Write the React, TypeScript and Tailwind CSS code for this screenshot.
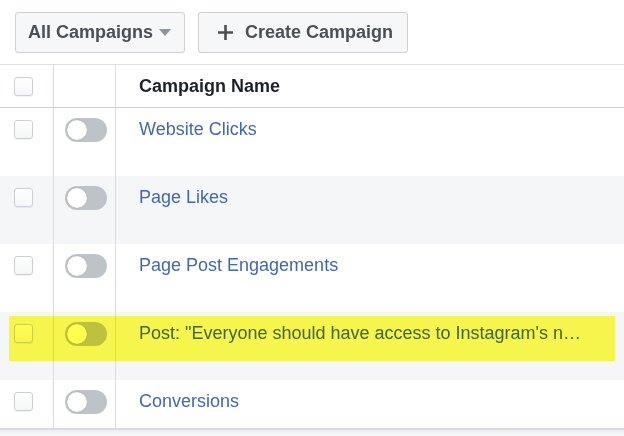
import React from "react";

const rows = [
  { name: "Website Clicks", shaded: false },
  { name: "Page Likes", shaded: true },
  { name: "Page Post Engagements", shaded: false },
  { name: "Post: \"Everyone should have access to Instagram's n…", shaded: true },
  { name: "Conversions", shaded: false },
];

function Checkbox() {
  return (
    <span className="block w-[19px] h-[19px] rounded-[3px] border border-[#ccd0d5] bg-gradient-to-b from-white to-[#f5f6f7] shadow-[0_1px_1px_rgba(0,0,0,0.06)]" />
  );
}

function Toggle() {
  return (
    <span className="flex items-center w-[42px] h-[24px] rounded-full bg-[#bec2c9] p-[2px]">
      <span className="block w-[20px] h-[20px] rounded-full bg-white shadow-[0_0_1px_rgba(0,0,0,0.3)]" />
    </span>
  );
}

export default function App() {
  return (
    <div className="relative w-[624px] h-[436px] overflow-hidden bg-white font-['Liberation_Sans',Arial,sans-serif] text-[18px]">
      {/* Toolbar */}
      <div className="flex gap-[13px] h-[64px] pl-[15px] pt-[12px]">
        <button className="flex items-center gap-[6px] w-[170px] h-[41px] pl-[12px] rounded-[3px] border border-[#ced0d4] bg-[#f6f7f9] font-bold text-[#4b4f56]">
          All Campaigns
          <svg width="12" height="7" viewBox="0 0 12 7">
            <path d="M0 0h12L6 7z" fill="#8d949e" />
          </svg>
        </button>
        <button className="flex items-center gap-[12px] w-[210px] h-[41px] pl-[19px] rounded-[3px] border border-[#ced0d4] bg-[#f6f7f9] font-bold text-[#4b4f56]">
          <svg width="15" height="15" viewBox="0 0 15 15">
            <path d="M7.5 0v15M0 7.5h15" stroke="#4b4f56" strokeWidth="2.6" />
          </svg>
          Create Campaign
        </button>
      </div>

      {/* Table */}
      <div className="border-t border-[#dddfe2]">
        <div className="flex h-[43px] border-b border-[#cfd2d6] shadow-[0_1px_1px_rgba(0,0,0,0.08)]">
          <div className="flex items-center w-[54px] pl-[14px] border-r border-[#dadde1]">
            <Checkbox />
          </div>
          <div className="w-[62px] border-r border-[#dadde1]" />
          <div className="flex items-center pl-[23px] font-bold text-[#1d2129]">Campaign Name</div>
        </div>

        <div className="h-[320px] overflow-hidden">
          {rows.map((row) => (
            <div key={row.name} className={`flex h-[68px] ${row.shaded ? "bg-[#f5f6f8]" : "bg-white"}`}>
              <div className="flex items-start w-[54px] pl-[14px] pt-[12px] border-r border-[#dadde1]">
                <Checkbox />
              </div>
              <div className="flex items-start w-[62px] pl-[11px] pt-[10px] border-r border-[#dadde1]">
                <Toggle />
              </div>
              <div className="flex items-start pl-[23px] pt-[8px] text-[#4267b2] whitespace-nowrap">{row.name}</div>
            </div>
          ))}
        </div>
      </div>

      {/* Bottom edge */}
      <div className="h-[8px] border-t-2 border-[#d9dbe0] bg-gradient-to-b from-[#eceef1] to-[#f7f8f9]" />

      {/* Highlighter mark */}
      <div className="absolute left-[9px] top-[316px] w-[606px] h-[45px] bg-[#fffe4e] mix-blend-multiply" />
    </div>
  );
}
